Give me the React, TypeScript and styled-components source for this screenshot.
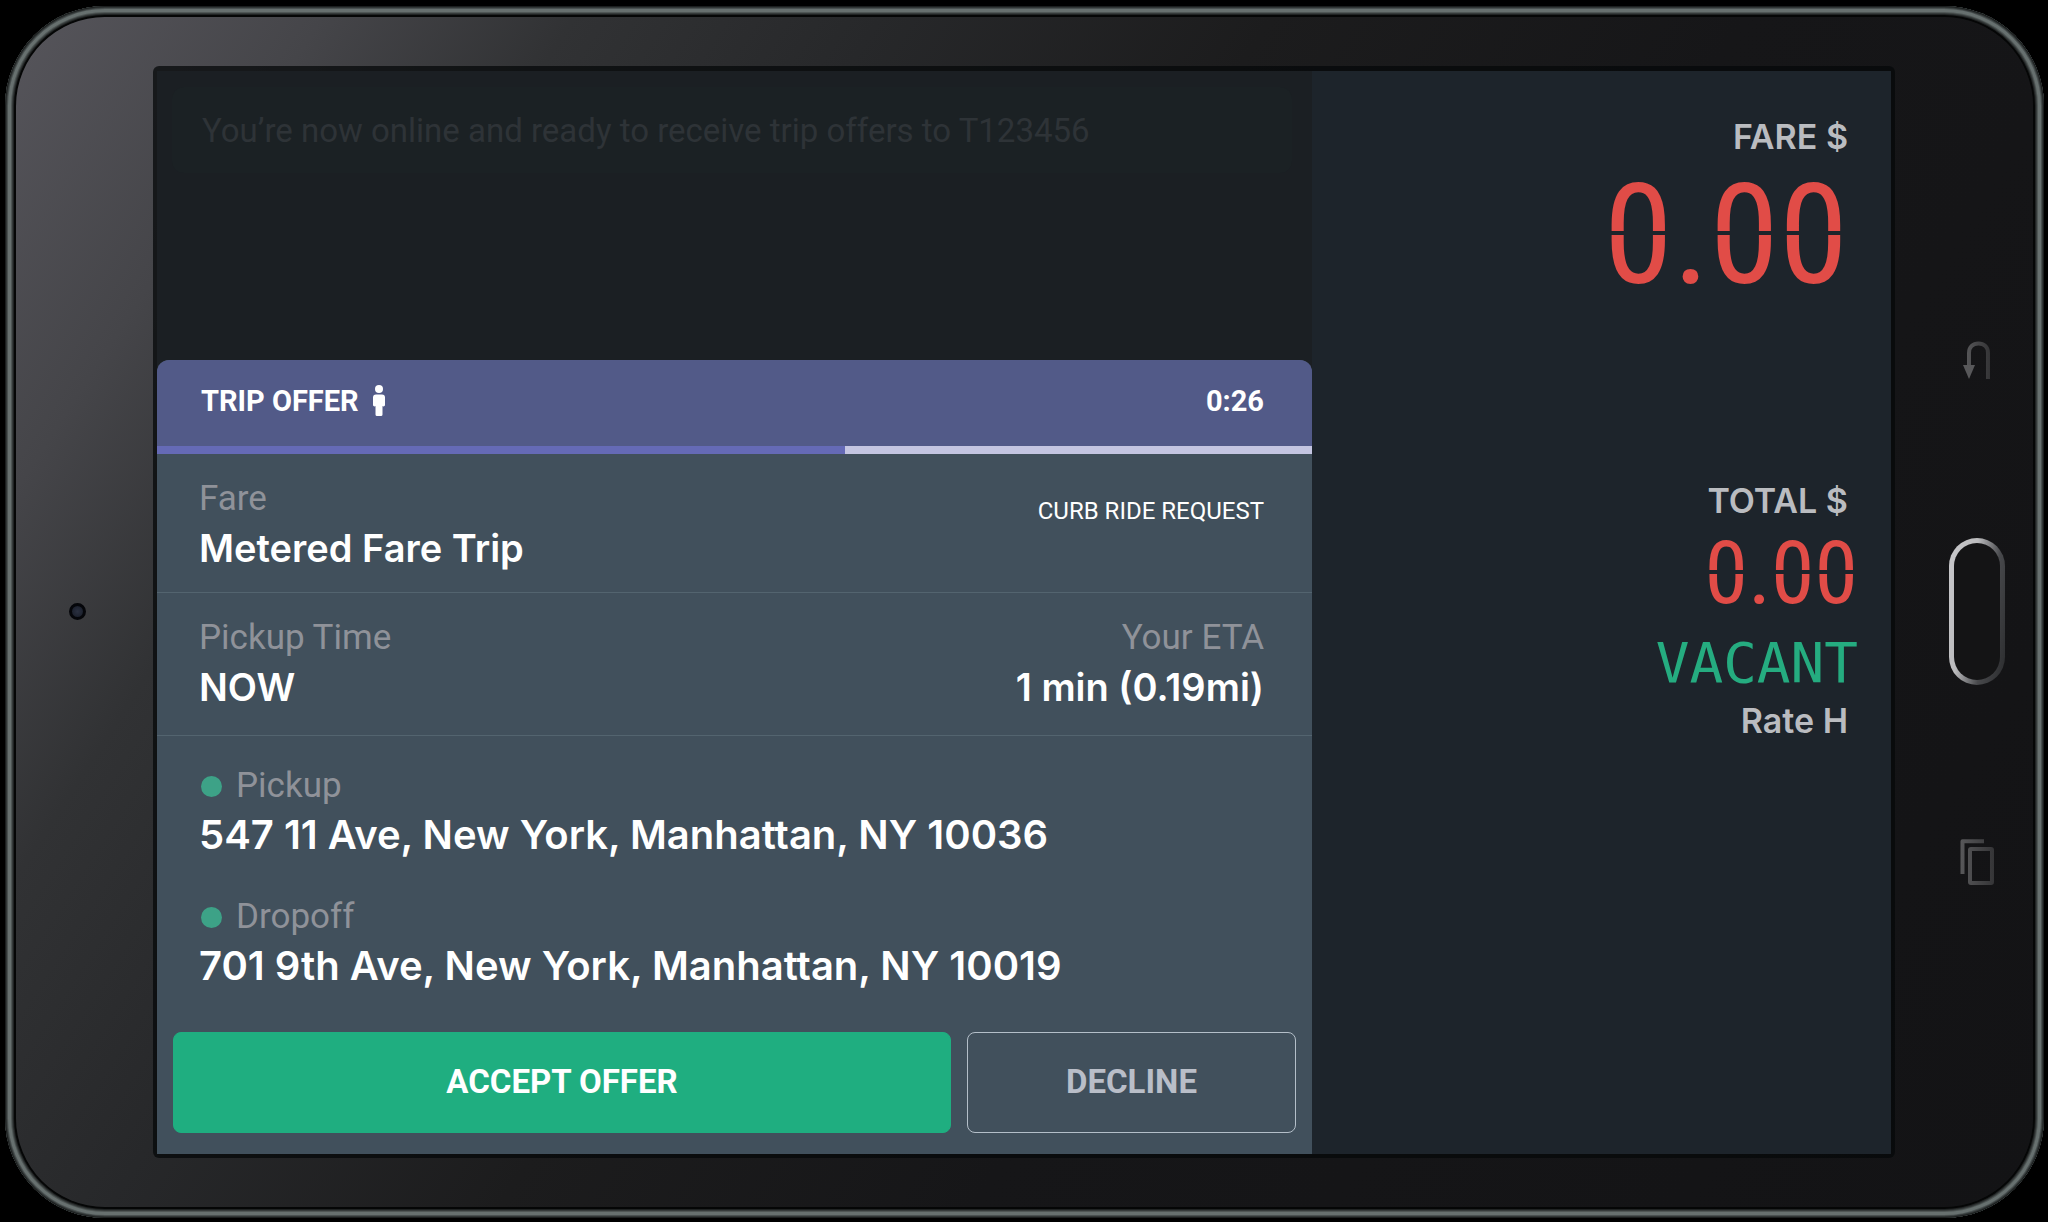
import React from "react";
import styled, { createGlobalStyle } from "styled-components";

const roboto = `Roboto, "Liberation Sans", sans-serif`;
const inter = `Inter, "Liberation Sans", sans-serif`;

const GlobalStyle = createGlobalStyle`
  *, *::before, *::after { box-sizing: border-box; }
  body { margin: 0; background: #000; font-family: ${roboto}; }
  h1, h2, p, dl, dt, dd { margin: 0; font-weight: inherit; }
  button { font: inherit; cursor: pointer; }
`;

/* ---------- Device ---------- */

const Page = styled.div`
  display: flex;
  min-height: 100vh;
  padding: 6px 4px 4px 5px;
`;

const Rim = styled.div`
  display: flex;
  flex: 1;
  padding: 11px;
  border-radius: 100px;
  background: #0d0f0f;
  box-shadow:
    inset 0 0 0 1px #1b1e1e,
    inset 0 0 0 2px #313636,
    inset 0 0 0 3px #4a5151,
    inset 0 0 0 6px #67706f,
    inset 0 0 0 7px #4f5655,
    inset 0 0 0 8px #353a3a,
    inset 0 0 0 9px #202323,
    inset 0 0 0 11px #050606;
`;

const Body = styled.div`
  display: grid;
  grid-template-columns: 137px minmax(0, 1fr) 138px;
  flex: 1;
  padding: 49px 0;
  border-radius: 89px;
  background: linear-gradient(
    123deg,
    #56555b 0%,
    #454549 11%,
    #313234 20%,
    #27282a 31%,
    #1c1c1d 45%,
    #161618 62%,
    #131315 100%
  );
`;

const LeftBezel = styled.div`
  display: flex;
  align-items: center;
  padding: 0 0 2px 53px;
`;

const Camera = styled.div`
  width: 17px;
  height: 17px;
  border: 3px solid #05060a;
  border-radius: 50%;
  background: radial-gradient(#2a3040, #171b26);
`;

const RightBezel = styled.nav`
  display: flex;
  flex-direction: column;
  align-items: center;
  justify-content: center;
  gap: 153px;
  padding: 0 0 2px 26px;
`;

const KeyButton = styled.button`
  display: flex;
  align-items: center;
  justify-content: center;
  width: 64px;
  height: 48px;
  padding: 0;
  border: 0;
  background: none;
`;

const HomeButton = styled.button`
  width: 56px;
  height: 147px;
  padding: 0;
  border: 5px solid transparent;
  border-radius: 28px;
  background:
    linear-gradient(#141415, #141415) padding-box,
    linear-gradient(100deg, #c9c9cc 0%, #bbbbbd 36%, #48494c 66%, #2a2b2d 100%) border-box;
`;

const Screen = styled.main`
  display: grid;
  grid-template-columns: minmax(0, 1155fr) minmax(0, 579fr);
  border: 4px solid rgba(5, 8, 10, 0.75);
  border-top-width: 5px;
  border-radius: 6px;
  background: #1d242b;
  background-clip: padding-box;
`;

/* ---------- Offer column ---------- */

const OfferColumn = styled.div`
  display: flex;
  flex-direction: column;
  background: #1b1f23;
`;

const Toast = styled.p`
  margin: 16px 20px 24px 15px;
  padding: 24px 30px 22px;
  border-radius: 12px;
  background: #1b2124;
  color: #2e3337;
  font-size: 33px;
  line-height: 40px;
`;

const Card = styled.section`
  margin-top: auto;
  border-radius: 12px 12px 0 0;
  background: #41505c;
  overflow: hidden;
`;

const CardHeader = styled.header`
  display: flex;
  align-items: center;
  justify-content: space-between;
  height: 86px;
  padding: 0 48px 5px 44px;
  background: #525a88;
  color: #fff;
  font-size: 29px;
  font-weight: 700;
  line-height: 36px;
`;

const CardTitle = styled.h1`
  display: flex;
  align-items: center;
  gap: 14px;
  font-size: 29px;
`;

const Countdown = styled.time`
  font-weight: 700;
`;

const ProgressTrack = styled.div`
  height: 8px;
  background: #c4c5e1;
`;

const ProgressFill = styled.div`
  height: 100%;
  background: #656ab6;
`;

const Row = styled.dl<{ $compact?: boolean }>`
  display: flex;
  justify-content: space-between;
  padding: ${(p) => (p.$compact ? "25px 48px 18px 42px" : "25px 48px 22px 42px")};
  border-bottom: 1px solid #53646f;
`;

const Stops = styled.dl`
  display: flex;
  flex-direction: column;
  gap: 36px;
  padding: 30px 42px 40px;
`;

const Field = styled.div<{ $end?: boolean }>`
  display: flex;
  flex-direction: column;
  gap: 3px;
  text-align: ${(p) => (p.$end ? "right" : "left")};
`;

const Label = styled.dt`
  display: flex;
  align-items: center;
  gap: 14px;
  color: #8f9299;
  font-size: 35px;
  line-height: 40px;
`;

const EndLabel = styled(Label)`
  justify-content: flex-end;
`;

const Value = styled.dd<{ $large?: boolean }>`
  color: #fff;
  font-family: ${inter};
  font-size: ${(p) => (p.$large ? 40 : 38)}px;
  font-weight: 600;
  line-height: 52px;
`;

const Tag = styled.p`
  padding-top: 14px;
  color: #fff;
  font-size: 24px;
  line-height: 36px;
`;

const Dot = styled.span`
  width: 21px;
  height: 21px;
  margin-left: 2px;
  border-radius: 50%;
  background: #3da287;
`;

const Actions = styled.div`
  display: grid;
  grid-template-columns: minmax(0, 778fr) minmax(0, 329fr);
  gap: 16px;
  padding: 0 16px 21px;
`;

const ActionButton = styled.button<{ $primary?: boolean }>`
  height: 101px;
  padding: 0 0 2px;
  border: 1px solid ${(p) => (p.$primary ? "#1fae80" : "#b4bfc9")};
  border-radius: 8px;
  background: ${(p) => (p.$primary ? "#1fae80" : "transparent")};
  color: ${(p) => (p.$primary ? "#fff" : "#b9bec8")};
  font-size: 33px;
  font-weight: 700;
`;

/* ---------- Meter column ---------- */

const MeterColumn = styled.aside`
  display: flex;
  flex-direction: column;
  gap: 168px;
  padding: 46px 43px 0 0;
  background: #1d242b;
`;

const Meter = styled.section`
  display: flex;
  flex-direction: column;
  align-items: flex-end;
`;

const MeterLabel = styled.h2`
  color: #babcc0;
  font-family: ${inter};
  font-size: 34px;
  font-weight: 600;
  line-height: 40px;
`;

/* The lit digits are split at mid height, like the two halves of an LED digit. */
const Readout = styled.output<{ $small?: boolean }>`
  margin-right: ${(p) => (p.$small ? -10 : 0)}px;
  color: transparent;
  background: linear-gradient(
    #e14c47 calc(49% - 2px),
    transparent calc(49% - 2px) calc(49% + 2px),
    #e14c47 calc(49% + 2px)
  );
  background-clip: text;
  -webkit-background-clip: text;
  font-family: "Roboto Condensed", ${roboto};
  font-size: ${(p) => (p.$small ? 88 : 140)}px;
  font-weight: 400;
  line-height: ${(p) => (p.$small ? 104 : 156)}px;
`;

const Status = styled.output`
  margin-right: -10px;
  color: #25ac80;
  font-family: "DejaVu Sans Mono", monospace;
  font-size: 56px;
  line-height: 76px;
`;

/* ---------- Icons ---------- */

const PersonIcon = () => (
  <svg width="12" height="31" viewBox="0 0 12 31" fill="#fff" aria-hidden="true">
    <circle cx="6" cy="4" r="4" />
    <path d="M3 9.500h6a3 3 0 0 1 3 3V20a1.500 1.500 0 0 1-2.500 1.100V29.500a1.500 1.500 0 0 1-1.500 1.500H4a1.500 1.500 0 0 1-1.500-1.500V21.100A1.500 1.500 0 0 1 0 20v-7.500a3 3 0 0 1 3-3z" />
  </svg>
);

const BackIcon = () => (
  <svg width="28" height="39" viewBox="0 0 28 39" fill="none" aria-hidden="true">
    <defs>
      <linearGradient id="back" gradientUnits="userSpaceOnUse" x1="0" y1="0" x2="28" y2="0">
        <stop offset="0" stopColor="#5b5b5d" />
        <stop offset="1" stopColor="#333335" />
      </linearGradient>
    </defs>
    <path d="M6 26V12C6 6 10 2.500 15.500 2.500S25 6 25 12V38" stroke="url(#back)" strokeWidth="4" />
    <path d="M0 24H12L6 38z" fill="#58585a" />
  </svg>
);

const RecentIcon = () => (
  <svg width="34" height="46" viewBox="0 0 34 46" fill="none" aria-hidden="true">
    <defs>
      <linearGradient id="recent" gradientUnits="userSpaceOnUse" x1="0" y1="0" x2="34" y2="0">
        <stop offset="0" stopColor="#58585a" />
        <stop offset="1" stopColor="#353537" />
      </linearGradient>
    </defs>
    <g stroke="url(#recent)" strokeWidth="4" strokeLinejoin="round">
      <path d="M2.500 35V2.200H24" />
      <rect x="10" y="10" width="22" height="34" rx="1" />
    </g>
  </svg>
);

const elapsedShare = 0.596;

const stops = [
  { label: "Pickup", address: "547 11 Ave, New York, Manhattan, NY 10036" },
  { label: "Dropoff", address: "701 9th Ave, New York, Manhattan, NY 10019" },
];

export default function App() {
  return (
    <>
      <GlobalStyle />
      <Page>
        <Rim>
          <Body>
            <LeftBezel>
              <Camera />
            </LeftBezel>
            <Screen>
              <OfferColumn>
                <Toast>You’re now online and ready to receive trip offers to T123456</Toast>
                <Card>
                  <CardHeader>
                    <CardTitle>
                      TRIP OFFER
                      <PersonIcon />
                    </CardTitle>
                    <Countdown>0:26</Countdown>
                  </CardHeader>
                  <ProgressTrack>
                    <ProgressFill style={{ width: `${elapsedShare * 100}%` }} />
                  </ProgressTrack>
                  <Row $compact>
                    <Field>
                      <Label>Fare</Label>
                      <Value>Metered Fare Trip</Value>
                    </Field>
                    <Tag>CURB RIDE REQUEST</Tag>
                  </Row>
                  <Row>
                    <Field>
                      <Label>Pickup Time</Label>
                      <Value>NOW</Value>
                    </Field>
                    <Field $end>
                      <EndLabel>Your ETA</EndLabel>
                      <Value>1 min (0.19mi)</Value>
                    </Field>
                  </Row>
                  <Stops>
                    {stops.map((stop) => (
                      <Field key={stop.label}>
                        <Label>
                          <Dot />
                          {stop.label}
                        </Label>
                        <Value $large>{stop.address}</Value>
                      </Field>
                    ))}
                  </Stops>
                  <Actions>
                    <ActionButton type="button" $primary>
                      ACCEPT OFFER
                    </ActionButton>
                    <ActionButton type="button">DECLINE</ActionButton>
                  </Actions>
                </Card>
              </OfferColumn>
              <MeterColumn>
                <Meter>
                  <MeterLabel>FARE $</MeterLabel>
                  <Readout>0.00</Readout>
                </Meter>
                <Meter>
                  <MeterLabel>TOTAL $</MeterLabel>
                  <Readout $small>0.00</Readout>
                  <Status>VACANT</Status>
                  <MeterLabel>Rate H</MeterLabel>
                </Meter>
              </MeterColumn>
            </Screen>
            <RightBezel aria-label="Device keys">
              <KeyButton type="button" aria-label="Back">
                <BackIcon />
              </KeyButton>
              <HomeButton type="button" aria-label="Home" />
              <KeyButton type="button" aria-label="Recent apps">
                <RecentIcon />
              </KeyButton>
            </RightBezel>
          </Body>
        </Rim>
      </Page>
    </>
  );
}
